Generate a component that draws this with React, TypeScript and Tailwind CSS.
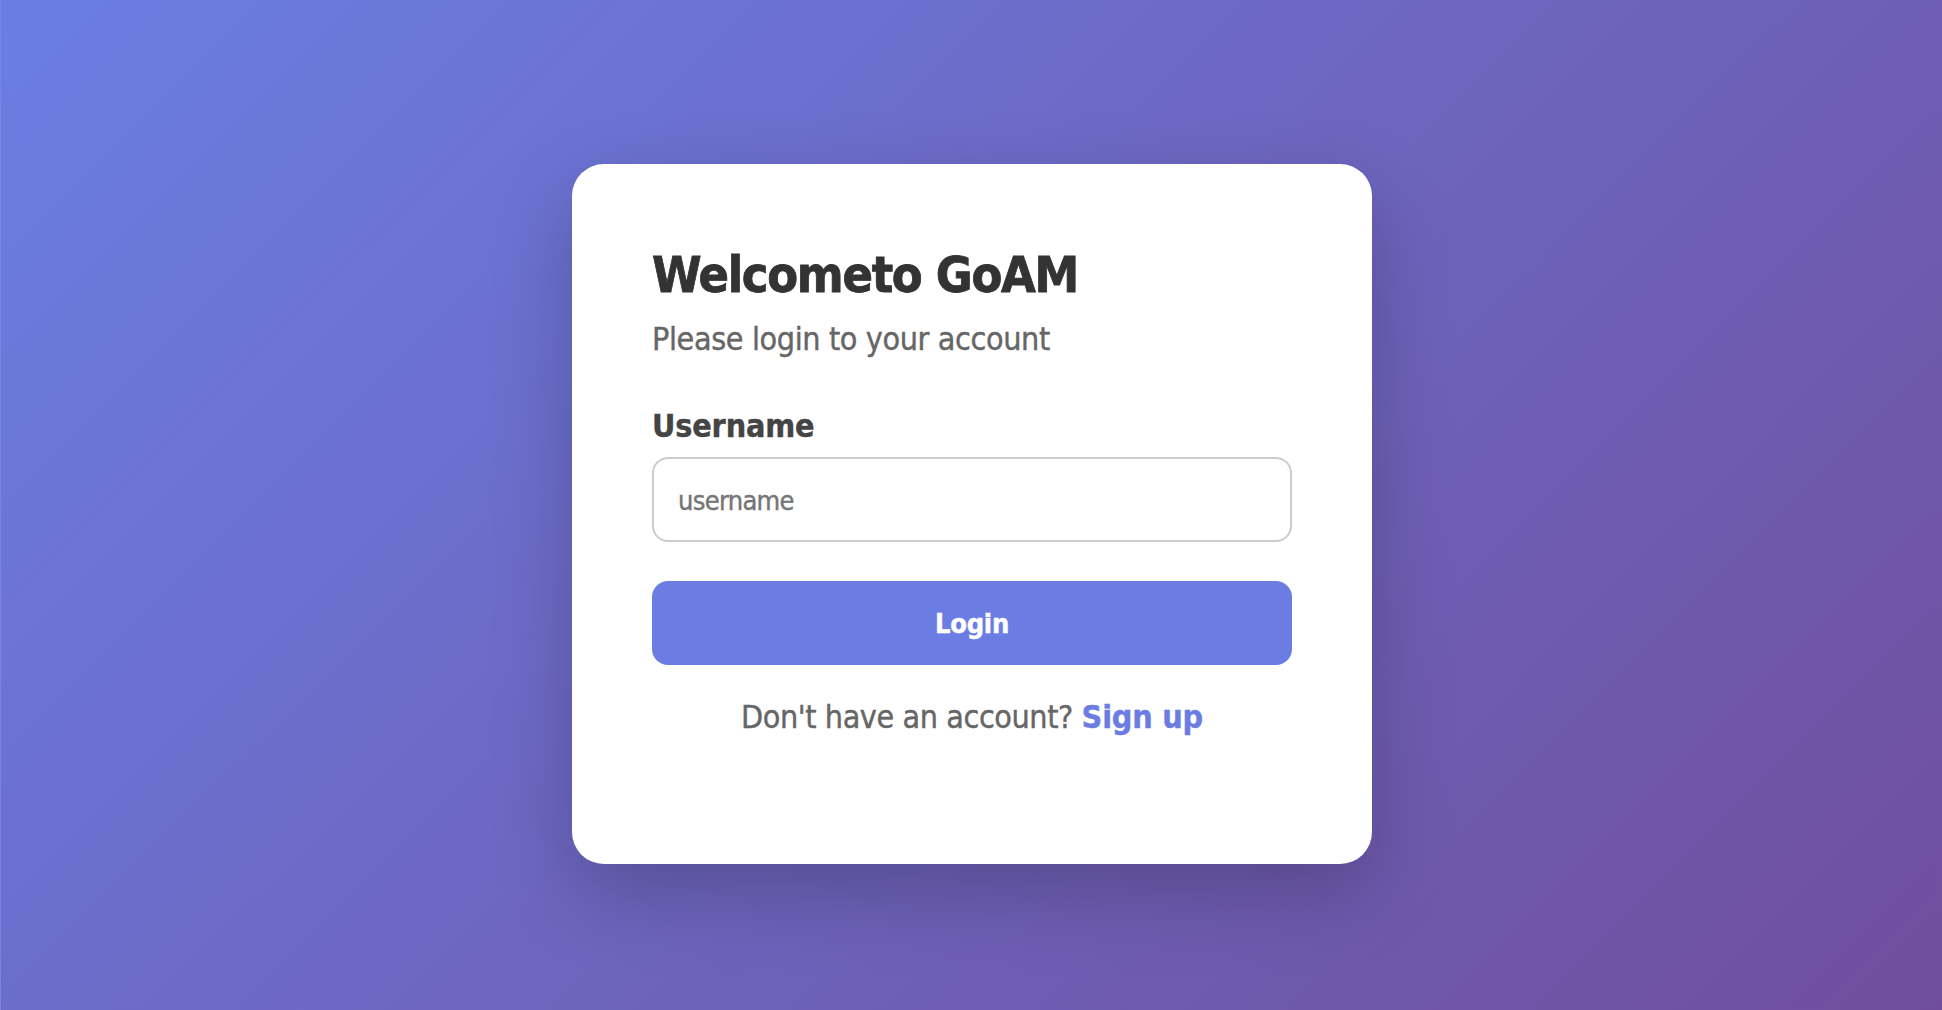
export default function App() {
  return (
    <main className="flex h-[1010px] w-full items-center justify-center border-l border-[#7885e0] bg-[linear-gradient(135deg,#6a7ee3_0%,#704e9d_100%)] pt-[18px] pl-px font-['DejaVu_Sans_Condensed','DejaVu_Sans',sans-serif] [font-stretch:condensed] [-webkit-text-stroke:0.4px]">
      <section className="flex h-[700px] w-[800px] flex-col rounded-[32px] bg-white px-20 pt-[80px] shadow-[0_30px_80px_rgba(0,0,0,0.21)]">
        <h1 className="h-[62px] text-[50px] leading-[62px] font-bold tracking-[-1.3px] whitespace-nowrap text-[#333] [-webkit-text-stroke:0.8px]">Welcometo GoAM</h1>
        <p className="mt-[13px] h-10 text-[32px] leading-10 tracking-[-0.38px] text-[#666]">Please login to your account</p>
        <label htmlFor="username" className="mt-[47px] h-10 text-[32px] leading-10 font-bold tracking-[-0.15px] text-[#444]">Username</label>
        <input id="username" placeholder="username" className="mt-[11px] h-[85px] rounded-2xl border-2 border-[#ccc] px-6 pt-[2px] text-[27px] tracking-[-0.7px] text-[#333] placeholder:text-[#757575]" />
        <button className="mt-[39px] h-[84px] rounded-2xl bg-[#6b7de2] pt-[2px] text-[27px] font-bold tracking-[-0.25px] text-white">Login</button>
        <p className="mt-8 text-center text-[32px] leading-10 tracking-[-0.42px] text-[#666]">Don't have an account? <a href="#" className="font-bold tracking-[-0.2px] text-[#6b7de2]">Sign up</a></p>
      </section>
    </main>
  );
}
